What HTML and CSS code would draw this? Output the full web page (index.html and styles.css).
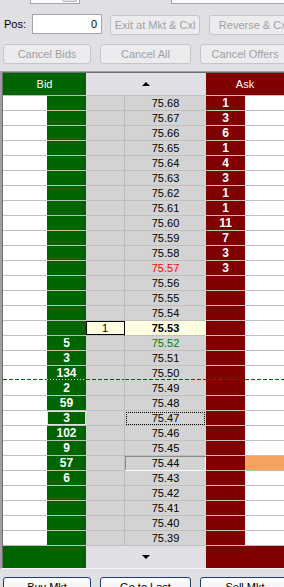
FILE: index.html
```html
<!DOCTYPE html>
<html>
<head>
<meta charset="utf-8">
<link rel="stylesheet" href="styles.css">
</head>
<body>
<div class="top">
  <div class="r1">
    <span class="lbl">Qty:</span>
    <div class="inp qty"><div class="spin"><div class="sb"></div><div class="sb"><svg width="7" height="4" viewBox="0 0 7 4"><polygon points="0,0 7,0 3.5,4" fill="#4d6185"/></svg></div></div></div>
    <span class="lbl pl">Open P/L:</span>
    <div class="inp plv"></div>
  </div>
  <div class="r2">
    <span class="lbl">Pos:</span>
    <div class="inp pos">0</div>
    <button class="btn b-exit" disabled>Exit at Mkt &amp; Cxl</button>
    <button class="btn b-rev" disabled>Reverse &amp; Cxl</button>
  </div>
  <div class="r3">
    <button class="btn w1" disabled>Cancel Bids</button>
    <button class="btn w2" disabled>Cancel All</button>
    <button class="btn w3" disabled>Cancel Offers</button>
  </div>
</div>

<div class="frame">
 <div class="grid">
  <div class="hdr">
    <div class="h-bid">Bid</div>
    <div class="h-mid"><svg width="8" height="4" viewBox="0 0 8 4"><polygon points="0,4 8,4 4,0" fill="#000"/></svg></div>
    <div class="h-ask">Ask</div>
  </div>
  <div class="row"><div class="c bw"></div><div class="c bq"></div><div class="c mk"></div><div class="c px">75.68</div><div class="c aq">1</div><div class="c aw"></div></div>
  <div class="row"><div class="c bw"></div><div class="c bq"></div><div class="c mk"></div><div class="c px">75.67</div><div class="c aq">3</div><div class="c aw"></div></div>
  <div class="row"><div class="c bw"></div><div class="c bq"></div><div class="c mk"></div><div class="c px">75.66</div><div class="c aq">6</div><div class="c aw"></div></div>
  <div class="row"><div class="c bw"></div><div class="c bq"></div><div class="c mk"></div><div class="c px">75.65</div><div class="c aq">1</div><div class="c aw"></div></div>
  <div class="row"><div class="c bw"></div><div class="c bq"></div><div class="c mk"></div><div class="c px">75.64</div><div class="c aq">4</div><div class="c aw"></div></div>
  <div class="row"><div class="c bw"></div><div class="c bq"></div><div class="c mk"></div><div class="c px">75.63</div><div class="c aq">3</div><div class="c aw"></div></div>
  <div class="row"><div class="c bw"></div><div class="c bq"></div><div class="c mk"></div><div class="c px">75.62</div><div class="c aq">1</div><div class="c aw"></div></div>
  <div class="row"><div class="c bw"></div><div class="c bq"></div><div class="c mk"></div><div class="c px">75.61</div><div class="c aq">1</div><div class="c aw"></div></div>
  <div class="row"><div class="c bw"></div><div class="c bq"></div><div class="c mk"></div><div class="c px">75.60</div><div class="c aq">11</div><div class="c aw"></div></div>
  <div class="row"><div class="c bw"></div><div class="c bq"></div><div class="c mk"></div><div class="c px">75.59</div><div class="c aq">7</div><div class="c aw"></div></div>
  <div class="row"><div class="c bw"></div><div class="c bq"></div><div class="c mk"></div><div class="c px">75.58</div><div class="c aq">3</div><div class="c aw"></div></div>
  <div class="row"><div class="c bw"></div><div class="c bq"></div><div class="c mk"></div><div class="c px hi">75.57</div><div class="c aq">3</div><div class="c aw"></div></div>
  <div class="row"><div class="c bw"></div><div class="c bq"></div><div class="c mk"></div><div class="c px">75.56</div><div class="c aq"></div><div class="c aw"></div></div>
  <div class="row"><div class="c bw"></div><div class="c bq"></div><div class="c mk"></div><div class="c px">75.55</div><div class="c aq"></div><div class="c aw"></div></div>
  <div class="row"><div class="c bw"></div><div class="c bq"></div><div class="c mk"></div><div class="c px">75.54</div><div class="c aq"></div><div class="c aw"></div></div>
  <div class="row"><div class="c bw"></div><div class="c bq"></div><div class="c mk sel">1</div><div class="c px last">75.53</div><div class="c aq"></div><div class="c aw"></div></div>
  <div class="row"><div class="c bw"></div><div class="c bq">5</div><div class="c mk"></div><div class="c px lo">75.52</div><div class="c aq"></div><div class="c aw"></div></div>
  <div class="row"><div class="c bw"></div><div class="c bq">3</div><div class="c mk"></div><div class="c px">75.51</div><div class="c aq"></div><div class="c aw"></div></div>
  <div class="row dash"><div class="c bw"></div><div class="c bq">134</div><div class="c mk"></div><div class="c px">75.50</div><div class="c aq"></div><div class="c aw"></div></div>
  <div class="row"><div class="c bw"></div><div class="c bq">2</div><div class="c mk"></div><div class="c px">75.49</div><div class="c aq"></div><div class="c aw"></div></div>
  <div class="row"><div class="c bw"></div><div class="c bq">59</div><div class="c mk"></div><div class="c px">75.48</div><div class="c aq"></div><div class="c aw"></div></div>
  <div class="row"><div class="c bw"></div><div class="c bq boxed">3</div><div class="c mk"></div><div class="c px focus">75.47</div><div class="c aq"></div><div class="c aw"></div></div>
  <div class="row"><div class="c bw"></div><div class="c bq">102</div><div class="c mk"></div><div class="c px">75.46</div><div class="c aq"></div><div class="c aw"></div></div>
  <div class="row"><div class="c bw"></div><div class="c bq">9</div><div class="c mk"></div><div class="c px">75.45</div><div class="c aq"></div><div class="c aw"></div></div>
  <div class="row"><div class="c bw"></div><div class="c bq">57</div><div class="c mk"></div><div class="c px sunk">75.44</div><div class="c aq"></div><div class="c aw orange"></div></div>
  <div class="row"><div class="c bw"></div><div class="c bq">6</div><div class="c mk"></div><div class="c px">75.43</div><div class="c aq"></div><div class="c aw"></div></div>
  <div class="row"><div class="c bw"></div><div class="c bq"></div><div class="c mk"></div><div class="c px">75.42</div><div class="c aq"></div><div class="c aw"></div></div>
  <div class="row"><div class="c bw"></div><div class="c bq"></div><div class="c mk"></div><div class="c px">75.41</div><div class="c aq"></div><div class="c aw"></div></div>
  <div class="row"><div class="c bw"></div><div class="c bq"></div><div class="c mk"></div><div class="c px">75.40</div><div class="c aq"></div><div class="c aw"></div></div>
  <div class="row"><div class="c bw"></div><div class="c bq"></div><div class="c mk"></div><div class="c px">75.39</div><div class="c aq"></div><div class="c aw"></div></div>
  <div class="ftr">
    <div class="h-bid"></div>
    <div class="h-mid"><svg width="8" height="4" viewBox="0 0 8 4"><polygon points="0,0 8,0 4,4" fill="#000"/></svg></div>
    <div class="h-ask"></div>
  </div>
 </div>
</div>

<div class="bottom">
  <button class="btn act w1">Buy Mkt</button>
  <button class="btn act w2">Go to Last</button>
  <button class="btn act w3">Sell Mkt</button>
</div>
</body>
</html>
```
FILE: styles.css
```css
* { box-sizing: border-box; }
html, body {
  margin: 0;
  width: 284px;
  height: 587px;
  overflow: hidden;
  background: #e0dfe3;
  font: 11px "Liberation Sans", Arial, sans-serif;
  color: #000;
}

.top { margin-top: -16px; width: 284px; overflow: hidden; }
.r1, .r2, .r3, .bottom { display: flex; align-items: center; white-space: nowrap; }
.r1 { height: 20px; }
.r2 { height: 21px; margin-top: 10px; align-items: flex-start; }
.r3 { height: 20px; margin-top: 9px; }

.lbl { padding-left: 4px; flex-shrink: 0; line-height: 20px; }
.r1 .lbl:first-child { width: 30px; }
.r2 .lbl { width: 32px; line-height: 21px; }
.lbl.pl { margin-left: 35px; width: 56px; padding-left: 0; }

.inp {
  height: 20px;
  background: #fff;
  border: 1px solid #a2a6ab;
  flex-shrink: 0;
}
.qty { width: 50px; display: flex; justify-content: flex-end; padding: 1px; }
.plv { width: 120px; }
.pos { width: 70px; text-align: right; padding-right: 4px; line-height: 18px; }

.spin { width: 15px; display: flex; flex-direction: column; margin-right: 1px; }
.sb {
  height: 9px;
  background: #e6e6ea;
  border: 1px solid #b7b9c0;
  border-radius: 2px;
  display: flex;
  align-items: center;
  justify-content: center;
}

.btn {
  height: 20px;
  flex-shrink: 0;
  margin: 0;
  padding: 0;
  border: 1px solid #c6c6c9;
  border-radius: 3px;
  background: #ececef;
  color: #a0a0a0;
  font: 11px "Liberation Sans", Arial, sans-serif;
  text-align: center;
  white-space: nowrap;
}
.b-exit { width: 90px; margin-left: 8px; margin-top: 1px; }
.b-rev { width: 90px; margin-left: 9px; margin-top: 1px; }
.w1 { width: 88px; margin-left: 3px; }
.w2 { width: 91px; margin-left: 9px; }
.w3 { width: 90px; margin-left: 9px; }

.btn.act {
  border-color: #1f3f6e;
  background: linear-gradient(#ffffff, #f2f2f2 70%, #dcdcdc);
  color: #000;
}

.frame {
  margin-top: 7px;
  width: 290px;
  border-top: 1px solid #a0a0a0;
  border-left: 2px solid #a0a0a0;
  border-bottom: 1px solid #f4f4f4;
}
.grid {
  border-top: 1px solid #6e6e6e;
  border-left: 1px solid #6e6e6e;
}

.hdr, .ftr { display: flex; height: 22px; line-height: 22px; color: #fff; }
.hdr { height: 23px; border-bottom: 1px solid #c0c0c0; }
.h-bid, .h-mid, .h-ask { flex-shrink: 0; }
.h-bid { width: 83px; background: #006400; text-align: center; }
.h-mid { width: 120px; background: #e0dfe3; display: flex; align-items: center; justify-content: center; }
.h-ask { width: 90px; background: #800000; text-align: center; padding-right: 12px; }

.row { display: flex; }
.c {
  height: 15px;
  border-bottom: 1px solid #c0c0c0;
  line-height: 14px;
  text-align: center;
  flex-shrink: 0;
}
.bw { width: 44px; background: #fff; }
.bq { width: 39px; background: #006400; color: #fff; font-weight: bold; font-size: 12px; }
.mk { width: 39px; background: #d3d3d3; border-right: 1px solid #bcbcbc; }
.px { width: 81px; background: #d3d3d3; }
.aq { width: 39px; background: #800000; color: #fff; font-weight: bold; font-size: 12px; }
.aw { width: 48px; background: #fff; }

.px.hi { color: #ff0000; }
.px.lo { color: #008000; }
.px.last { background: #ffffe1; font-weight: bold; }
.mk.sel {
  background: #ffffe1;
  border-right-color: #000;
  box-shadow: inset 1px 1px 0 #000, inset 0 -1px 0 #000;
}
.bq.boxed { box-shadow: inset 0 0 0 1px #e4e4e4; }
.px.focus { outline: 1px dotted #000; outline-offset: -2px; }
.px.sunk { box-shadow: inset 1px 1px 0 #8a8a8a, inset -1px 0 0 #fff; border-bottom-color: #fff; }
.aw.orange { background: #f4a460; }

.dash .c {
  border-bottom-color: transparent;
  background-image: repeating-linear-gradient(90deg, #006400 0 4px, transparent 4px 6px);
  background-size: 100% 1px;
  background-position: left bottom;
  background-repeat: no-repeat;
}
.dash .bq {
  background-image: repeating-linear-gradient(90deg, #d8d8d8 0 1px, transparent 1px 3px);
}

.bottom { margin-top: 8px; }
```
